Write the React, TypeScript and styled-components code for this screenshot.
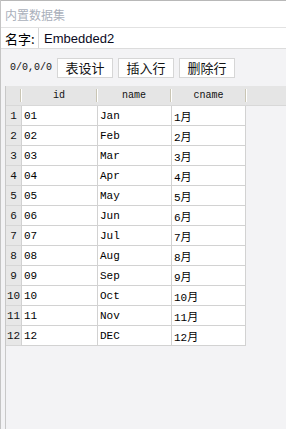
import React, { FC } from 'react'
import styled, { createGlobalStyle } from 'styled-components'

const GlobalStyle = createGlobalStyle`
  html, body {
    margin: 0;
    padding: 0;
    background: #f3f3f5;
  }
  * {
    box-sizing: border-box;
  }
`

const CJK = `"Noto Sans CJK SC", sans-serif`
const MONO = `"Liberation Mono", "Noto Sans CJK SC", monospace`

const Page = styled.div`
  width: 286px;
  height: 429px;
  display: flex;
  flex-direction: column;
  background: #f3f3f5;
  border-left: 1px solid #c4c4c4;
  overflow: hidden;
`

const TitleBar = styled.div`
  height: 28px;
  display: flex;
  align-items: center;
  padding-left: 4px;
  background: #ffffff;
  border-top: 1px solid #b8b8b8;
  border-bottom: 1px solid #e2e2e2;
  font-family: ${CJK};
  font-size: 12px;
  color: #aab0bb;
`

const NameRow = styled.div`
  height: 21px;
  display: flex;
  align-items: stretch;
  background: #ffffff;
  border-bottom: 1px solid #dcdcdc;
`

const Label = styled.span`
  width: 37px;
  display: flex;
  align-items: center;
  padding-left: 4px;
  font-family: ${CJK};
  font-size: 13px;
  color: #000;
`

const NameInput = styled.div`
  flex: 1;
  display: flex;
  align-items: center;
  padding-left: 5px;
  border-left: 1px solid #d6d6d6;
  font-family: "Liberation Sans", Arial, sans-serif;
  font-size: 13px;
  color: #0a0a1e;
`

const Toolbar = styled.div`
  height: 37px;
  display: flex;
  align-items: center;
  gap: 5px;
  padding-left: 9px;
`

const Counter = styled.span`
  font-family: ${MONO};
  font-size: 10px;
  color: #111;
`

const ToolButton = styled.button`
  height: 20px;
  width: 56px;
  padding: 0;
  background: #ffffff;
  border: 1px solid #d6d6d6;
  border-radius: 0;
  font-family: ${CJK};
  font-size: 13px;
  line-height: 18px;
  color: #111;
`

const Grid = styled.div`
  flex: 1;
  margin-left: 4px;
  border-left: 1px solid #c8c8c8;
  display: flex;
  flex-direction: column;
`

const COLS = '15px 76px 74px 75px'

const HeaderRow = styled.div`
  height: 20px;
  display: grid;
  grid-template-columns: ${COLS} 1fr;
  background: #e5e5e5;
  border-bottom: 1px solid #d8d8d8;
`

const HeaderCell = styled.div<{ sep?: boolean }>`
  position: relative;
  display: flex;
  align-items: center;
  justify-content: center;
  font-family: ${MONO};
  font-size: 10px;
  color: #111;
  &::after {
    content: '';
    display: ${({ sep }) => (sep === false ? 'none' : 'block')};
    position: absolute;
    right: 0;
    top: 3px;
    bottom: 3px;
    width: 1px;
    background: #c9c5b4;
    box-shadow: 1px 0 0 #ffffff;
  }
`

const DataRow = styled.div`
  height: 20px;
  display: grid;
  grid-template-columns: ${COLS};
`

const RowNum = styled.div`
  display: flex;
  align-items: center;
  justify-content: center;
  background: #e7e7e7;
  border-bottom: 1px solid #d6d6d6;
  font-family: ${MONO};
  font-size: 11px;
  color: #111;
`

const Cell = styled.div`
  display: flex;
  align-items: center;
  padding-left: 2px;
  background: #ffffff;
  border-left: 1px solid #d2d2d2;
  border-bottom: 1px solid #d2d2d2;
  font-family: ${MONO};
  font-size: 11px;
  color: #000;
  &:last-child {
    border-right: 1px solid #d2d2d2;
  }
`

const months = [
  ['01', 'Jan', '1月'],
  ['02', 'Feb', '2月'],
  ['03', 'Mar', '3月'],
  ['04', 'Apr', '4月'],
  ['05', 'May', '5月'],
  ['06', 'Jun', '6月'],
  ['07', 'Jul', '7月'],
  ['08', 'Aug', '8月'],
  ['09', 'Sep', '9月'],
  ['10', 'Oct', '10月'],
  ['11', 'Nov', '11月'],
  ['12', 'DEC', '12月'],
]

const App: FC = () => {
  return (
    <>
      <GlobalStyle />
      <Page>
        <TitleBar>内置数据集</TitleBar>

        <NameRow>
          <Label>名字:</Label>
          <NameInput>Embedded2</NameInput>
        </NameRow>

        <Toolbar>
          <Counter>0/0,0/0</Counter>
          <ToolButton>表设计</ToolButton>
          <ToolButton>插入行</ToolButton>
          <ToolButton>删除行</ToolButton>
        </Toolbar>

        <Grid>
          <HeaderRow>
            <HeaderCell />
            <HeaderCell>id</HeaderCell>
            <HeaderCell>name</HeaderCell>
            <HeaderCell>cname</HeaderCell>
            <HeaderCell sep={false} />
          </HeaderRow>

          {months.map(([id, name, cname], i) => (
            <DataRow key={id}>
              <RowNum>{i + 1}</RowNum>
              <Cell>{id}</Cell>
              <Cell>{name}</Cell>
              <Cell>{cname}</Cell>
            </DataRow>
          ))}
        </Grid>
      </Page>
    </>
  )
}

export default App
